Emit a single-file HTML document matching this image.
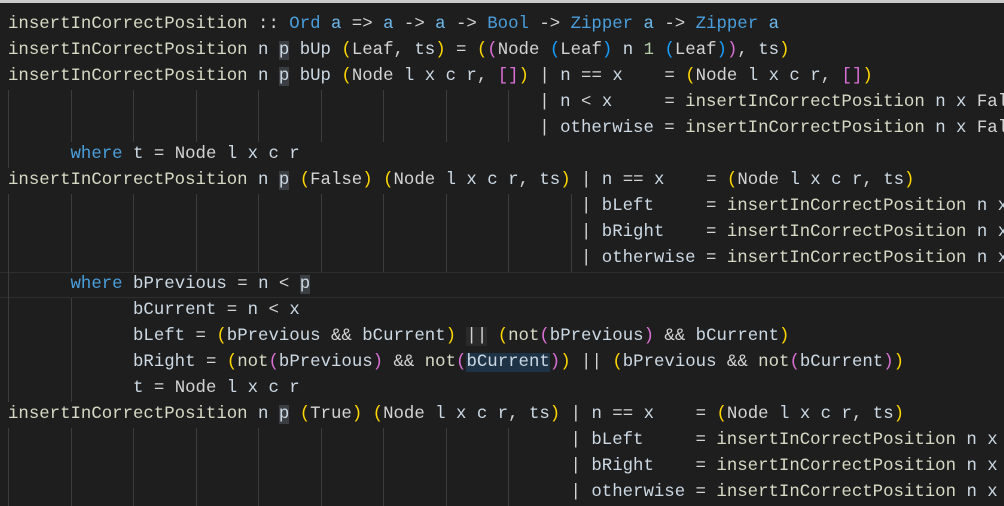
<!DOCTYPE html>
<html><head><meta charset="utf-8"><style>
html,body{margin:0;padding:0;background:#1e1e1e;width:1004px;height:500px;overflow:hidden}
.top{position:absolute;left:0;top:0;width:1004px;height:3px;background:#c9c9c9}
.l{position:absolute;left:8px;height:26px;line-height:26px;white-space:pre;font-family:"Liberation Mono",monospace;font-size:17.37px;color:#d4d4d4}
.g{position:absolute;width:1px;height:26px;background:#3c3c3c}
.f{color:#d6dac4}.v{color:#ccd9e4}.k{color:#4a9fdc}.t{color:#4a9fdc}.a{color:#6db8ec}
.y{color:#ffd700}.p{color:#da70d6}.b{color:#179fff}
.h{background:#3a3d41}
.n{color:#b5cea8}
.cur{position:absolute;left:0;top:272px;width:1004px;height:24px;border-top:1px solid #2e2e2e;border-bottom:1px solid #2e2e2e}
.sel{background:#1f3346}
</style></head><body>
<div class="top"></div>
<div class="cur"></div>
<div id="g"></div>
<div class="l" style="top:12px"><span class="f">insertInCorrectPosition</span> :: <span class="t">Ord</span> <span class="a">a</span> =&gt; <span class="a">a</span> -&gt; <span class="a">a</span> -&gt; <span class="t">Bool</span> -&gt; <span class="t">Zipper</span> <span class="a">a</span> -&gt; <span class="t">Zipper</span> <span class="a">a</span></div>
<div class="l" style="top:38px"><span class="f">insertInCorrectPosition</span> <span class="v">n</span> <span class="v h">p</span> <span class="v">bUp</span> <span class="y">(</span>Leaf, <span class="v">ts</span><span class="y">)</span> = <span class="y">(</span><span class="p">(</span>Node <span class="b">(</span>Leaf<span class="b">)</span> <span class="v">n</span> <span class="n">1</span> <span class="b">(</span>Leaf<span class="b">)</span><span class="p">)</span>, <span class="v">ts</span><span class="y">)</span></div>
<div class="l" style="top:64px"><span class="f">insertInCorrectPosition</span> <span class="v">n</span> <span class="v h">p</span> <span class="v">bUp</span> <span class="y">(</span>Node <span class="v">l x c r</span>, <span class="p">[]</span><span class="y">)</span> | <span class="v">n</span> == <span class="v">x</span>    = <span class="y">(</span>Node <span class="v">l x c r</span>, <span class="p">[]</span><span class="y">)</span></div>
<div class="l" style="top:90px">                                                   | <span class="v">n</span> &lt; <span class="v">x</span>     = <span class="f">insertInCorrectPosition</span> <span class="v">n x</span> False</div>
<div class="l" style="top:116px">                                                   | <span class="v">otherwise</span> = <span class="f">insertInCorrectPosition</span> <span class="v">n x</span> False</div>
<div class="l" style="top:142px">      <span class="k">where</span> <span class="v">t</span> = Node <span class="v">l x c r</span></div>
<div class="l" style="top:168px"><span class="f">insertInCorrectPosition</span> <span class="v">n</span> <span class="v h">p</span> <span class="y">(</span>False<span class="y">)</span> <span class="y">(</span>Node <span class="v">l x c r</span>, <span class="v">ts</span><span class="y">)</span> | <span class="v">n</span> == <span class="v">x</span>    = <span class="y">(</span>Node <span class="v">l x c r</span>, <span class="v">ts</span><span class="y">)</span></div>
<div class="l" style="top:194px">                                                       | <span class="v">bLeft</span>     = <span class="f">insertInCorrectPosition</span> <span class="v">n x</span></div>
<div class="l" style="top:220px">                                                       | <span class="v">bRight</span>    = <span class="f">insertInCorrectPosition</span> <span class="v">n x</span></div>
<div class="l" style="top:246px">                                                       | <span class="v">otherwise</span> = <span class="f">insertInCorrectPosition</span> <span class="v">n x</span></div>
<div class="l" style="top:272px">      <span class="k">where</span> <span class="v">bPrevious</span> = <span class="v">n</span> &lt; <span class="v h">p</span></div>
<div class="l" style="top:298px">            <span class="v">bCurrent</span> = <span class="v">n</span> &lt; <span class="v">x</span></div>
<div class="l" style="top:324px">            <span class="v">bLeft</span> = <span class="y">(</span><span class="v">bPrevious</span> &amp;&amp; <span class="v">bCurrent</span><span class="y">)</span> <span style="background:#2a2a2a">||</span> <span class="y">(</span><span class="f">not</span><span class="p">(</span><span class="v">bPrevious</span><span class="p">)</span> &amp;&amp; <span class="v">bCurrent</span><span class="y">)</span></div>
<div class="l" style="top:350px">            <span class="v">bRight</span> = <span class="y">(</span><span class="f">not</span><span class="p">(</span><span class="v">bPrevious</span><span class="p">)</span> &amp;&amp; <span class="f">not</span><span class="p">(</span><span class="v sel">bCurrent</span><span class="p">)</span><span class="y">)</span> || <span class="y">(</span><span class="v">bPrevious</span> &amp;&amp; <span class="f">not</span><span class="p">(</span><span class="v">bCurrent</span><span class="p">)</span><span class="y">)</span></div>
<div class="l" style="top:376px">            <span class="v">t</span> = Node <span class="v">l x c r</span></div>
<div class="l" style="top:402px"><span class="f">insertInCorrectPosition</span> <span class="v">n</span> <span class="v h">p</span> <span class="y">(</span>True<span class="y">)</span> <span class="y">(</span>Node <span class="v">l x c r</span>, <span class="v">ts</span><span class="y">)</span> | <span class="v">n</span> == <span class="v">x</span>    = <span class="y">(</span>Node <span class="v">l x c r</span>, <span class="v">ts</span><span class="y">)</span></div>
<div class="l" style="top:428px">                                                      | <span class="v">bLeft</span>     = <span class="f">insertInCorrectPosition</span> <span class="v">n x</span></div>
<div class="l" style="top:454px">                                                      | <span class="v">bRight</span>    = <span class="f">insertInCorrectPosition</span> <span class="v">n x</span></div>
<div class="l" style="top:480px">                                                      | <span class="v">otherwise</span> = <span class="f">insertInCorrectPosition</span> <span class="v">n x</span></div>
<script>
var g=document.getElementById('g'),s='';
function add(top,maxc){for(var c=0;c<=maxc;c+=6){s+='<div class="g" style="top:'+top+'px;left:'+(8+c*10.42).toFixed(1)+'px"></div>';}}
add(90,48);add(116,48);add(142,0);
add(194,54);add(220,54);add(246,54);
add(272,0);
[298,324,350,376].forEach(function(t){add(t,6);});
add(428,48);add(454,48);add(480,48);
g.innerHTML=s;
</script>
</body></html>
